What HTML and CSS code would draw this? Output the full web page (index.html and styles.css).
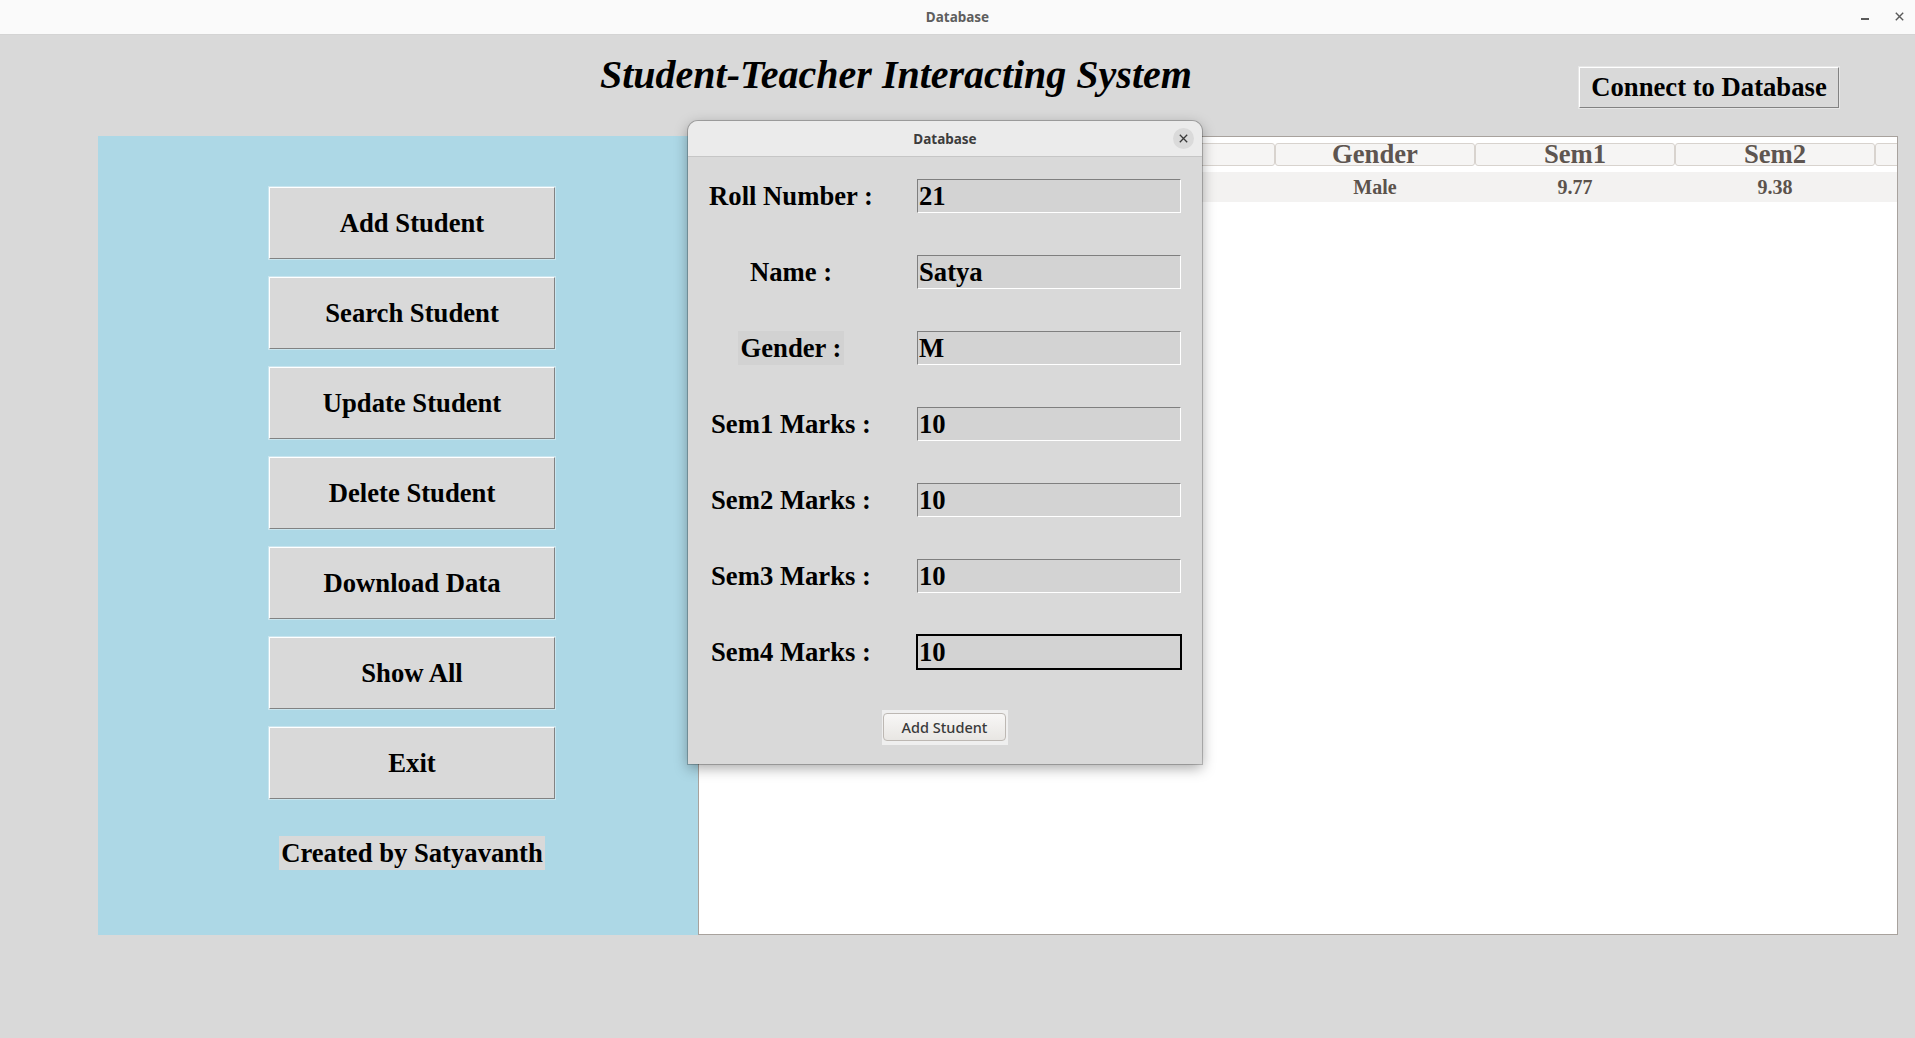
FILE: index.html
```html
<!DOCTYPE html>
<html lang="en">
<head>
<meta charset="utf-8">
<title>Database</title>
<link rel="stylesheet" href="styles.css">
</head>
<body>
  <header class="titlebar">
    <span class="wm-title">Database</span>
    <div class="wm-controls">
      <span class="wm-min"></span>
      <svg class="wm-close" width="9" height="9" viewBox="0 0 9 9"><path d="M0.8 0.8 L8.2 8.2 M8.2 0.8 L0.8 8.2" stroke="#5a5a5a" stroke-width="1.4" fill="none"/></svg>
    </div>
  </header>

  <div class="app">
    <div class="top-bar">
      <h1 class="app-title">Student-Teacher Interacting System</h1>
      <button class="tk-btn connect-btn">Connect to Database</button>
    </div>

    <div class="main">
      <nav class="side">
        <button class="tk-btn side-btn">Add Student</button>
        <button class="tk-btn side-btn">Search Student</button>
        <button class="tk-btn side-btn">Update Student</button>
        <button class="tk-btn side-btn">Delete Student</button>
        <button class="tk-btn side-btn">Download Data</button>
        <button class="tk-btn side-btn">Show All</button>
        <button class="tk-btn side-btn">Exit</button>
        <div class="credit">Created by Satyavanth</div>
      </nav>

      <section class="tree">
        <div class="tree-head">
          <div class="th th-first">Roll No</div>
          <div class="th">Name</div>
          <div class="th">Age</div>
          <div class="th">Gender</div>
          <div class="th">Sem1</div>
          <div class="th">Sem2</div>
          <div class="th">Sem3</div>
        </div>
        <div class="tr">
          <div class="td td-first">1</div>
          <div class="td">Satyavanth</div>
          <div class="td">20</div>
          <div class="td">Male</div>
          <div class="td">9.77</div>
          <div class="td">9.38</div>
          <div class="td">9.50</div>
        </div>
      </section>
    </div>
  </div>

  <div class="dialog">
    <div class="dialog-head">
      <span class="dialog-title">Database</span>
      <span class="dialog-close">
        <svg width="9" height="9" viewBox="0 0 9 9"><path d="M0.8 0.8 L8.2 8.2 M8.2 0.8 L0.8 8.2" stroke="#3a3a3a" stroke-width="1.3" fill="none"/></svg>
      </span>
    </div>
    <div class="form">
      <label class="f-label">Roll Number :</label>
      <input class="entry" type="text" value="21">
      <label class="f-label">Name :</label>
      <input class="entry" type="text" value="Satya">
      <label class="f-label f-label-shaded">Gender :</label>
      <input class="entry" type="text" value="M">
      <label class="f-label">Sem1 Marks :</label>
      <input class="entry" type="text" value="10">
      <label class="f-label">Sem2 Marks :</label>
      <input class="entry" type="text" value="10">
      <label class="f-label">Sem3 Marks :</label>
      <input class="entry" type="text" value="10">
      <label class="f-label">Sem4 Marks :</label>
      <input class="entry entry-focus" type="text" value="10">
    </div>
    <div class="dialog-actions">
      <div class="ttk-wrap"><button class="ttk-btn">Add Student</button></div>
    </div>
  </div>
</body>
</html>
```

FILE: styles.css
```css
* {
  box-sizing: border-box;
  margin: 0;
  padding: 0;
}

html, body {
  width: 1915px;
  height: 1038px;
  overflow: hidden;
  background: #d9d9d9;
  font-family: "Liberation Serif", "Times New Roman", serif;
}

body {
  position: relative;
}

/* window title bar */
.titlebar {
  height: 35px;
  background: #fafafa;
  border-bottom: 1px solid #d4d4d4;
  display: grid;
  grid-template-columns: 1fr auto 1fr;
  align-items: center;
}

.wm-title {
  grid-column: 2;
  font-family: "Noto Sans", "DejaVu Sans", sans-serif;
  font-weight: 700;
  font-size: 13.5px;
  color: #5e5e5e;
}

.wm-controls {
  grid-column: 3;
  justify-self: end;
  display: flex;
  align-items: center;
  gap: 26px;
  padding-right: 11px;
}

.wm-min {
  width: 8px;
  height: 1.5px;
  background: #5a5a5a;
  margin-top: 4px;
}

.wm-close {
  display: block;
  margin-top: -1px;
}

/* app */
.app {
  padding: 0 17px 0 98px;
}

.top-bar {
  height: 101px;
  display: flex;
  align-items: flex-start;
}

.app-title {
  margin: 20px 0 0 502px;
  font-size: 40px;
  line-height: 40px;
  font-weight: 700;
  font-style: italic;
  color: #000;
  white-space: nowrap;
}

.tk-btn {
  font-family: "Liberation Serif", "Times New Roman", serif;
  font-weight: 700;
  font-size: 26.67px;
  color: #000;
  background: #d9d9d9;
  border: 1px solid;
  border-color: #ffffff #828282 #828282 #ffffff;
  box-shadow: 0 0 0 1px rgba(255, 255, 255, 0.35);
  cursor: pointer;
}

.connect-btn {
  margin: 32px 59px 0 auto;
  width: 260px;
  height: 41px;
  line-height: 39px;
}

.main {
  display: flex;
  height: 799px;
}

.side {
  width: 600px;
  flex: 0 0 600px;
  background: #add8e6;
  display: flex;
  flex-direction: column;
  align-items: center;
  gap: 18px;
  padding: 51px 0 0 28px;
}

.side-btn {
  width: 286px;
  height: 72px;
  flex: 0 0 72px;
}

.credit {
  margin-top: 19px;
  height: 34px;
  line-height: 34px;
  padding: 0 2px;
  background: #d9d9d9;
  font-weight: 700;
  font-size: 26.67px;
  color: #000;
  white-space: nowrap;
}

/* tree view */
.tree {
  flex: 1;
  background: #ffffff;
  border: 1px solid #a8a29d;
  overflow: hidden;
}

.tree-head {
  display: flex;
  margin-top: 6px;
  height: 23px;
  white-space: nowrap;
}

.th {
  flex: 0 0 200px;
  height: 23px;
  border: 1px solid #d8d3ce;
  border-radius: 3px;
  background: #f6f5f4;
  text-align: center;
  font-weight: 700;
  font-size: 26.67px;
  line-height: 21px;
  color: #5e5550;
  overflow: hidden;
}

.tr {
  display: flex;
  margin-top: 6px;
  height: 30px;
  background: #f3f2f1;
  white-space: nowrap;
}

.td {
  flex: 0 0 200px;
  text-align: center;
  font-weight: 700;
  font-size: 20px;
  line-height: 30px;
  color: #5b524c;
}

.tree-head .th-first,
.tr .td-first {
  flex-basis: 176px;
}

/* dialog window */
.dialog {
  position: absolute;
  left: 688px;
  top: 121px;
  width: 514px;
  height: 643px;
  background: #d9d9d9;
  border-radius: 10px 10px 0 0;
  box-shadow: 0 0 0 1px rgba(0, 0, 0, 0.22), 0 4px 14px rgba(0, 0, 0, 0.35);
}

.dialog-head {
  position: relative;
  height: 36px;
  background: #ebebeb;
  border-bottom: 1px solid #c6c6c6;
  border-radius: 10px 10px 0 0;
  display: grid;
  place-items: center;
}

.dialog-title {
  font-family: "Noto Sans", "DejaVu Sans", sans-serif;
  font-weight: 700;
  font-size: 13.5px;
  color: #3c3c3c;
}

.dialog-close {
  position: absolute;
  right: 8px;
  top: 7px;
  width: 21px;
  height: 21px;
  border-radius: 50%;
  background: #dadada;
  display: grid;
  place-items: center;
}

.dialog-close svg {
  display: block;
}

.form {
  display: grid;
  grid-template-columns: 206px 266px;
  column-gap: 22px;
  row-gap: 42px;
  padding-top: 22px;
  align-items: center;
}

.f-label {
  justify-self: center;
  height: 34px;
  line-height: 34px;
  padding: 0 3px;
  font-weight: 700;
  font-size: 26.67px;
  color: #000;
  white-space: nowrap;
}

.f-label-shaded {
  background: #d2d2d2;
}

.entry {
  width: 264px;
  height: 34px;
  margin: 0 1px;
  padding: 0 1px;
  border: 1px solid;
  border-color: #7f7f7f #ffffff #ffffff #7f7f7f;
  background: #d3d3d3;
  font-family: "Liberation Serif", "Times New Roman", serif;
  font-weight: 700;
  font-size: 26.67px;
  line-height: 32px;
  color: #000;
  outline: none;
}

.entry-focus {
  border-color: #000;
  box-shadow: 0 0 0 1px #000;
}

.dialog-actions {
  display: flex;
  justify-content: center;
  margin-top: 41px;
}

.ttk-wrap {
  padding: 3px 2px 4px 1px;
  background: #efefef;
}

.ttk-btn {
  display: block;
  width: 123px;
  height: 28px;
  border: 1px solid #bdb8b3;
  border-radius: 4px;
  background: linear-gradient(#f8f7f6, #e8e6e3);
  font-family: "Noto Sans", "DejaVu Sans", sans-serif;
  font-size: 14.5px;
  font-weight: 500;
  color: #3a3a3a;
  cursor: pointer;
}
```
